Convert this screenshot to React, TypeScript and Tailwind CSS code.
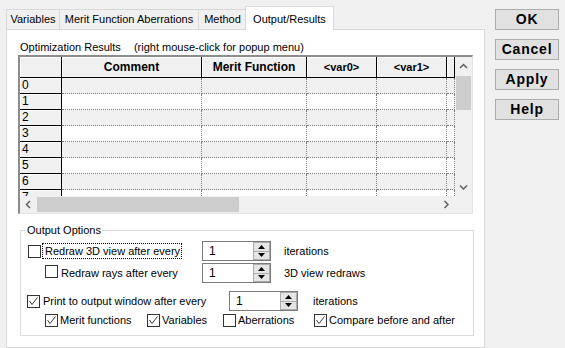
import React from "react";

const COLS = [
  { label: "Comment", w: "w-[140px]" },
  { label: "Merit Function", w: "w-[105px]" },
  { label: "<var0>", w: "w-[70px]" },
  { label: "<var1>", w: "w-[70px]" },
  { label: "", w: "w-[8px]" },
];

const ROWS = [0, 1, 2, 3, 4, 5, 6, 7];

function Chevron({ dir }: { dir: "up" | "down" | "left" | "right" }) {
  const d = {
    up: "M1 5 L4.5 1.5 L8 5",
    down: "M1 1.5 L4.5 5 L8 1.5",
    left: "M5 1 L1.5 4.5 L5 8",
    right: "M1.5 1 L5 4.5 L1.5 8",
  }[dir];
  const vert = dir === "up" || dir === "down";
  return (
    <svg width={vert ? 9 : 7} height={vert ? 7 : 9} viewBox={vert ? "0 0 9 7" : "0 0 7 9"}>
      <path d={d} stroke="#606060" strokeWidth="1.5" fill="none" />
    </svg>
  );
}

function Check({ checked }: { checked?: boolean }) {
  return (
    <span className="flex h-[13px] w-[13px] shrink-0 items-center justify-center border border-[#333333] bg-white">
      {checked && (
        <svg width="11" height="11" viewBox="0 0 11 11">
          <path d="M1.5 5 L4 8.5 L9.5 1.5" stroke="#3c3c3c" strokeWidth="1" fill="none" />
        </svg>
      )}
    </span>
  );
}

function Spinner() {
  return (
    <div className="flex h-[20px] w-[69px] shrink-0 border border-[#7a7a7a] bg-white">
      <span className="flex-1 pl-[6px] text-[12px] leading-[18px]">1</span>
      <div className="flex w-[17px] flex-col">
        <div className="flex flex-1 items-center justify-center border border-[#adadad] bg-[#e5e5e5]">
          <svg width="7" height="4" viewBox="0 0 7 4">
            <path d="M0 4 L3.5 0 L7 4 Z" fill="#000" />
          </svg>
        </div>
        <div className="flex flex-1 items-center justify-center border border-t-0 border-[#adadad] bg-[#e5e5e5]">
          <svg width="7" height="4" viewBox="0 0 7 4">
            <path d="M0 0 L3.5 4 L7 0 Z" fill="#000" />
          </svg>
        </div>
      </div>
    </div>
  );
}

function Grid() {
  return (
    <div className="flex h-[159px] w-[455px] flex-col border-l-2 border-t-2 border-r border-b border-l-[#8c8c8c] border-t-[#8c8c8c] border-r-[#e3e3e3] border-b-[#e3e3e3] text-[12px]">
      <div className="flex flex-1 overflow-hidden">
        <div className="flex-1 overflow-hidden">
          <div className="flex h-[21px] border-b border-black bg-[#f0f0f0]">
            <div className="w-[42px] shrink-0 border-r border-black shadow-[inset_1px_1px_0_#fff]" />
            {COLS.map((c, i) => (
              <div
                key={i}
                className={`${c.w} flex shrink-0 items-center justify-center border-r border-black font-bold shadow-[inset_1px_1px_0_#fff] ${i >= 2 ? "text-[11px]" : ""}`}
              >
                {c.label}
              </div>
            ))}
          </div>
          {ROWS.map((r) => (
            <div key={r} className={`flex h-[16px] ${r % 2 === 0 ? "bg-[#f0f0f0]" : "bg-white"}`}>
              <div className="w-[42px] shrink-0 border-r border-b border-black bg-[#f0f0f0] pl-[2px] leading-[15px] shadow-[inset_1px_1px_0_#fff]">
                {r}
              </div>
              {COLS.map((c, i) => (
                <div key={i} className={`${c.w} shrink-0 border-r border-b border-dotted border-[#808080]`} />
              ))}
            </div>
          ))}
        </div>
        <div className="flex w-[17px] flex-col bg-[#f0f0f0]">
          <div className="flex h-[19px] items-center justify-center">
            <Chevron dir="up" />
          </div>
          <div className="mx-[1px] h-[34px] bg-[#cdcdcd]" />
          <div className="flex-1" />
          <div className="flex h-[17px] items-center justify-center">
            <Chevron dir="down" />
          </div>
        </div>
      </div>
      <div className="flex h-[17px] bg-[#f0f0f0]">
        <div className="flex w-[17px] items-center justify-center">
          <Chevron dir="left" />
        </div>
        <div className="my-[1px] w-[202px] bg-[#cdcdcd]" />
        <div className="flex-1" />
        <div className="flex w-[17px] items-center justify-center">
          <Chevron dir="right" />
        </div>
        <div className="w-[17px]" />
      </div>
    </div>
  );
}

function Tab({ label, w, active }: { label: string; w: string; active?: boolean }) {
  if (active) {
    return (
      <div className={`${w} -mb-px -ml-px z-10 flex h-[24px] items-start justify-center whitespace-nowrap border border-b-0 border-[#d9d9d9] bg-white pt-[4px]`}>
        {label}
      </div>
    );
  }
  return (
    <div className={`${w} flex h-[20px] items-center justify-center whitespace-nowrap border-l border-t border-[#d9d9d9]`}>
      {label}
    </div>
  );
}

export default function App() {
  return (
    <div className="flex h-[348px] w-[565px] overflow-hidden whitespace-nowrap bg-[#f0f0f0] font-['Liberation_Sans',Arial,sans-serif] text-[11px] text-black">
      <div className="ml-[6px] flex w-[479px] flex-col pt-[6px]">
        <div className="flex h-[23px] items-end">
          <Tab label="Variables" w="w-[53px]" />
          <Tab label="Merit Function Aberrations" w="w-[139px]" />
          <Tab label="Method" w="w-[48px]" />
          <Tab label="Output/Results" w="w-[89px]" active />
        </div>
        <div className="h-[340px] border border-[#d9d9d9] bg-white px-[11px] pt-[9px]">
          <div className="flex h-[16px] items-center pl-[2px]">
            <span>Optimization Results</span>
            <span className="ml-[13px]">(right mouse-click for popup menu)</span>
          </div>
          <Grid />
          <fieldset className="ml-[2px] mt-[8px] w-[454px] border border-[#dcdcdc] pb-[6px]">
            <legend className="ml-[5px] px-[1px] leading-[16px]">Output Options</legend>
            <div className="mt-[3px] flex h-[20px] items-center pl-[7px]">
              <Check />
              <span className="ml-[1px] w-[140px] border border-dotted border-black pl-[2px] leading-[14px]">
                Redraw 3D view after every
              </span>
              <span className="ml-[20px]">
                <Spinner />
              </span>
              <span className="ml-[13px]">iterations</span>
            </div>
            <div className="mt-[2px] flex h-[20px] items-center pl-[24px]">
              <span className="mb-[4px]">
                <Check />
              </span>
              <span className="w-[144px] pl-[3px]">Redraw rays after every</span>
              <Spinner />
              <span className="ml-[13px]">3D view redraws</span>
            </div>
            <div className="mt-[8px] flex h-[20px] items-center pl-[6px]">
              <Check checked />
              <span className="w-[189px] pl-[3px]">Print to output window after every</span>
              <Spinner />
              <span className="ml-[15px]">iterations</span>
            </div>
            <div className="flex h-[18px] items-center pl-[24px]">
              <span className="flex w-[102px] items-center">
                <Check checked />
                <span className="pl-[2px]">Merit functions</span>
              </span>
              <span className="flex w-[76px] items-center">
                <Check checked />
                <span className="pl-[2px]">Variables</span>
              </span>
              <span className="flex w-[91px] items-center">
                <Check />
                <span className="pl-[2px]">Aberrations</span>
              </span>
              <span className="flex items-center">
                <Check checked />
                <span className="pl-[2px]">Compare before and after</span>
              </span>
            </div>
          </fieldset>
        </div>
      </div>
      <div className="ml-[10px] flex flex-col gap-[9px] pt-[9px] text-[14px] font-bold tracking-[0.8px]">
        {["OK", "Cancel", "Apply", "Help"].map((b) => (
          <div key={b} className="flex h-[21px] w-[64px] items-center justify-center border border-[#adadad] bg-[#e1e1e1]">
            {b}
          </div>
        ))}
      </div>
    </div>
  );
}
